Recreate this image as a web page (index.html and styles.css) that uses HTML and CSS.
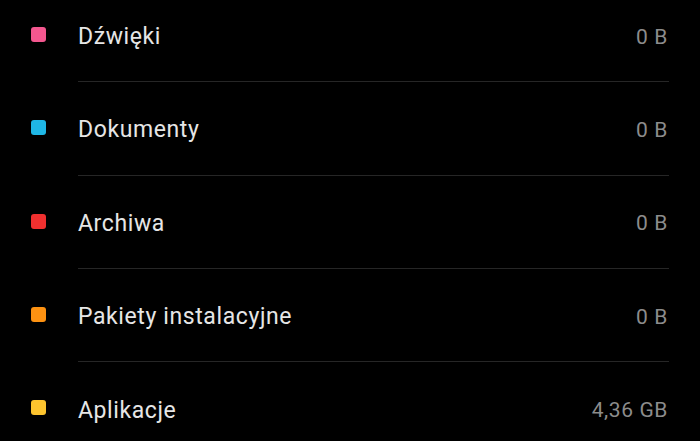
FILE: index.html
```html
<!DOCTYPE html>
<html lang="pl">
<head>
	<meta charset="UTF-8">
	<title>Pamięć</title>
	<link rel="stylesheet" href="styles.css">
</head>
<body>
	<ul id="storage-list">
		<li class="row">
			<span class="dot pink"></span>
			<div class="row-body">
				<span class="name">Dźwięki</span>
				<span class="size">0 B</span>
			</div>
		</li>
		<li class="row">
			<span class="dot cyan"></span>
			<div class="row-body">
				<span class="name">Dokumenty</span>
				<span class="size">0 B</span>
			</div>
		</li>
		<li class="row">
			<span class="dot red"></span>
			<div class="row-body">
				<span class="name">Archiwa</span>
				<span class="size">0 B</span>
			</div>
		</li>
		<li class="row">
			<span class="dot orange"></span>
			<div class="row-body">
				<span class="name">Pakiety instalacyjne</span>
				<span class="size">0 B</span>
			</div>
		</li>
		<li class="row">
			<span class="dot yellow"></span>
			<div class="row-body">
				<span class="name">Aplikacje</span>
				<span class="size">4,36 GB</span>
			</div>
		</li>
	</ul>
</body>
</html>
```

FILE: styles.css
```css
html, body{
	margin: 0;
	padding: 0;
	background: #000;
	height: 100%;
	overflow: hidden;
}
body{
	font-family: Roboto, "Noto Sans", sans-serif;
}
ul{
	list-style: none; margin: 0; padding: 0;
}
#storage-list{
	margin-top: -11px;
}
.row{
	display: flex;
	align-items: stretch;
	height: 93.3px;
}
.dot{
	width: 15px;
	height: 15px;
	border-radius: 3px;
	margin: 38px 32px 0 31px;
	flex: none;
}
.row-body{
	flex: 1;
	display: flex;
	align-items: center;
	justify-content: space-between;
	margin-right: 31px;
	border-bottom: 1px solid #262626;
	padding-top: 3px;
}
.row:last-child .row-body{
	border-bottom: none;
}
.name{
	color: #e6e6e6;
	font-size: 23px;
	letter-spacing: 0.6px;
}
.size{
	color: #8c8c8c;
	font-size: 21px;
	letter-spacing: 0.6px;
	margin-right: 1px;
}
.pink{ background: #f4578f; }
.cyan{ background: #1fb7e6; }
.red{ background: #f0302f; }
.orange{ background: #fd9212; }
.yellow{ background: #fdc42e; }
```
